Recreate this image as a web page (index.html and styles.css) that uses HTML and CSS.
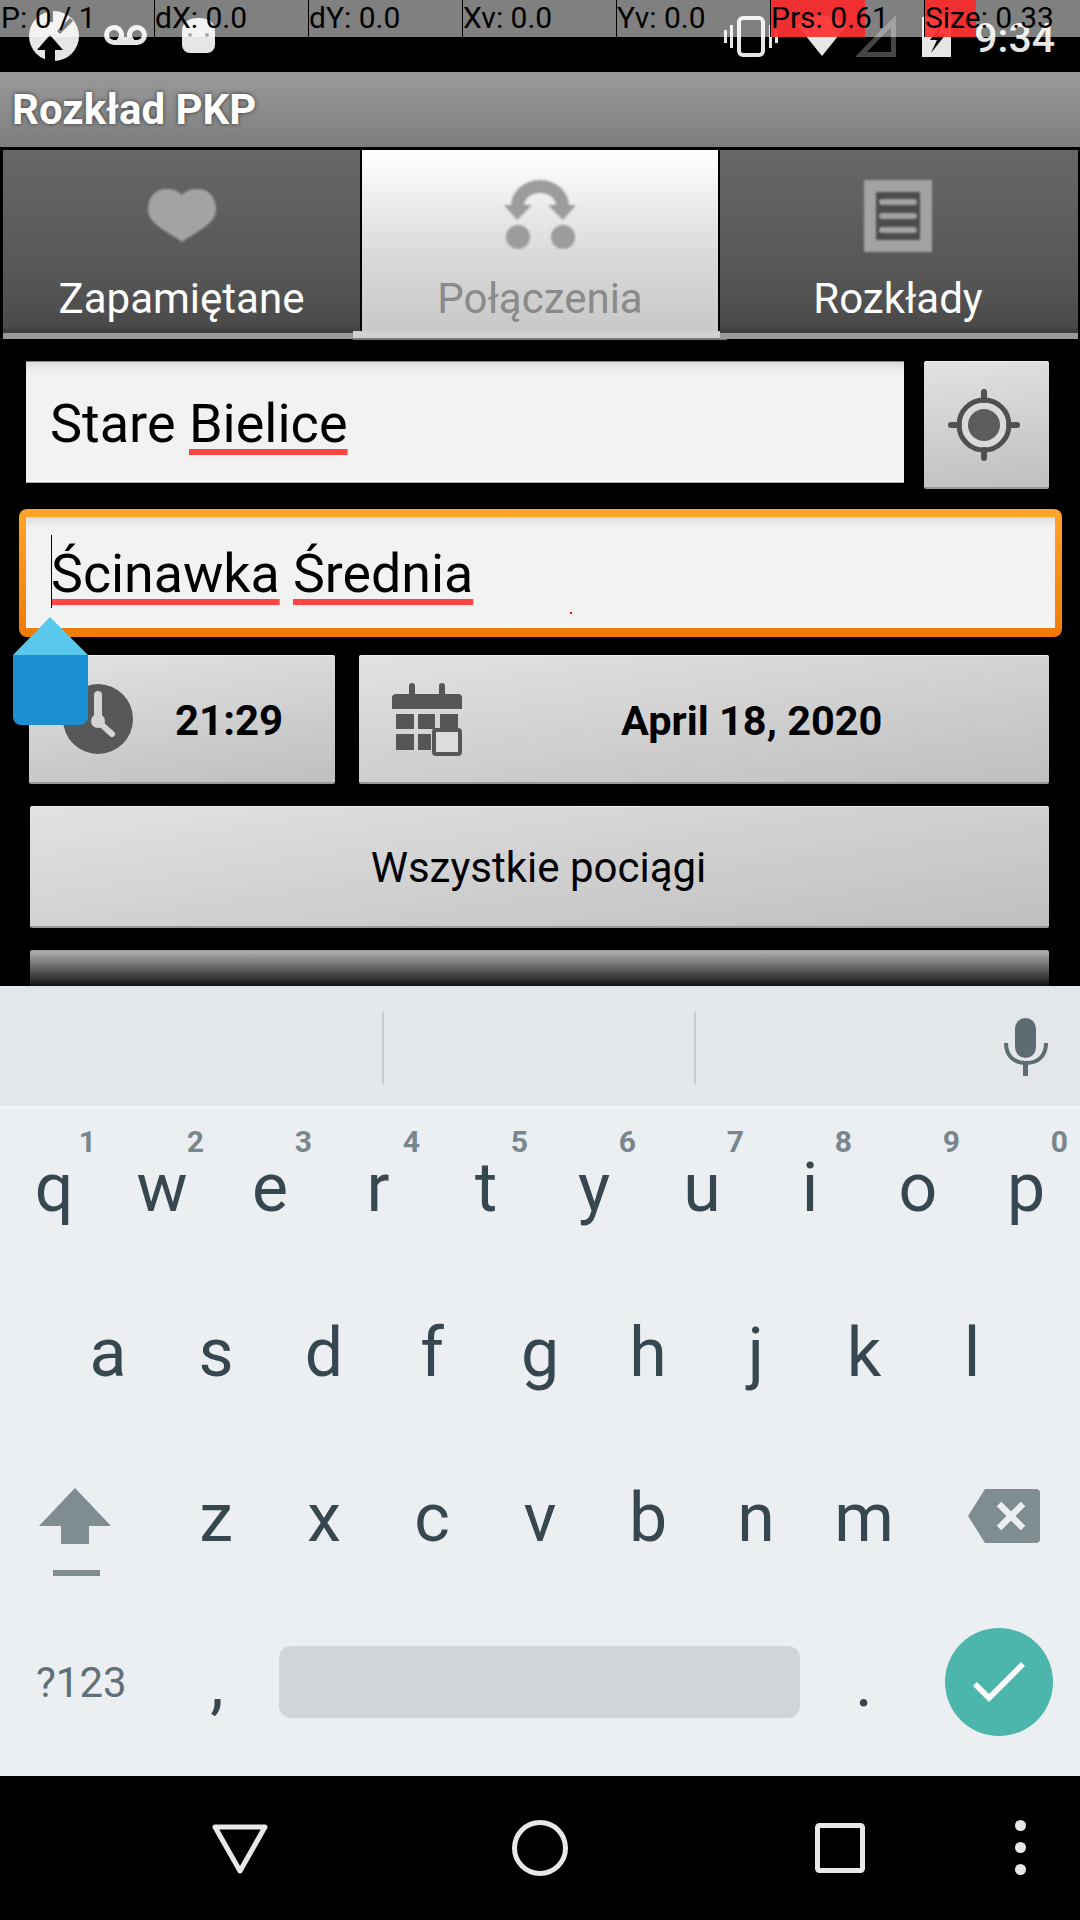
FILE: index.html
```html
<!DOCTYPE html>
<html lang="pl">
<head>
    <meta charset="UTF-8">
    <title>Rozkład PKP</title>
    <link rel="stylesheet" href="styles.css">
</head>
<body>
    <div class="status-bar">
        <svg class="st-update" width="50" height="50" viewBox="0 0 50 50">
            <circle cx="25" cy="25" r="25" fill="#e6e6e6"/>
            <path d="M21 24 8 39H16V50H26V39H34Z" fill="#000"/>
            <path d="M20 0h4v11h-4ZM41 7l3 3-13 13-3-3Z" fill="#000"/>
        </svg>
        <svg class="st-voicemail" width="45" height="20" viewBox="0 0 45 20">
            <path d="M11 2.500a7.500 7.500 0 1 0 0 15h23a7.500 7.500 0 1 0 0-15 7.500 7.500 0 0 0-6 12H17a7.500 7.500 0 0 0-6-12Z" fill="none" stroke="#e6e6e6" stroke-width="5"/>
        </svg>
        <svg class="st-android" width="33" height="35" viewBox="0 0 33 35">
            <path d="M0 13C0 4 7 0 16.500 0S33 4 33 13V27a8 8 0 0 1-8 8H8a8 8 0 0 1-8-8Z" fill="#e6e6e6"/>
            <circle cx="8" cy="17" r="2" fill="#555"/><circle cx="25" cy="17" r="2" fill="#555"/>
        </svg>
        <div class="status-right">
            <svg class="st-vibrate" width="54" height="41" viewBox="0 0 54 41">
                <rect x="15" y="2" width="24" height="37" rx="4" fill="none" stroke="#e6e6e6" stroke-width="4"/>
                <path d="M1.500 14v13M7.500 9v23M46.500 9v23M52.500 14v13" stroke="#e6e6e6" stroke-width="3"/>
            </svg>
            <svg class="st-wifi" width="50" height="42" viewBox="0 0 50 42">
                <path d="M25 42 0 11Q25-8 50 11Z" fill="#e6e6e6"/>
            </svg>
            <svg class="st-signal" width="40" height="42" viewBox="0 0 40 42">
                <path d="M37.500 6V39.500H5Z" fill="none" stroke="#454545" stroke-width="5"/>
            </svg>
            <svg class="st-battery" width="29" height="40" viewBox="0 0 29 40">
                <path d="M0 0H29V40H0Z" fill="#e6e6e6"/>
                <path d="M21 4 8 23h7L9 36 24 17h-7Z" fill="#000"/>
            </svg>
            <span class="st-time">9:34</span>
        </div>
    </div>

    <div class="pointer-bar">
        <div class="pt-cell">P: 0 / 1</div>
        <div class="pt-cell">dX: 0.0</div>
        <div class="pt-cell">dY: 0.0</div>
        <div class="pt-cell">Xv: 0.0</div>
        <div class="pt-cell">Yv: 0.0</div>
        <div class="pt-cell"><i class="pt-fill prs"></i><span>Prs: 0.61</span></div>
        <div class="pt-cell"><i class="pt-fill size"></i><span>Size: 0.33</span></div>
    </div>

    <div class="action-bar">Rozkład PKP</div>

    <div class="tabs">
        <div class="tab tab-fav">
            <svg class="tab-icon" width="68" height="53" viewBox="0 0 68 53">
                <path d="M34 6C38 1 44 0 50 0 61 0 68 8 68 21 68 35 46 44 34 53 22 44 0 35 0 21 0 8 7 0 18 0 24 0 30 1 34 6Z" fill="#a3a3a3"/>
            </svg>
            <span>Zapamiętane</span>
        </div>
        <div class="tab active">
            <svg class="tab-icon" width="72" height="69" viewBox="0 0 72 69" fill="#9c9c9c">
                <path d="M7 26A29 26 0 0 1 65 26H52A16 13 0 0 0 20 26Z"/>
                <path d="M0 25H28L13 40ZM44 25H72L59 40Z"/>
                <circle cx="14" cy="57" r="12"/><circle cx="59" cy="57" r="12"/>
            </svg>
            <span>Połączenia</span>
        </div>
        <div class="tab tab-list">
            <svg class="tab-icon" width="68" height="72" viewBox="0 0 68 72">
                <rect width="68" height="72" fill="#a3a3a3"/>
                <rect x="12" y="12" width="44" height="48" fill="#4c4c4c"/>
                <path d="M18 22H50M18 36H50M18 50H50" stroke="#a3a3a3" stroke-width="6" stroke-linecap="round"/>
            </svg>
            <span>Rozkłady</span>
        </div>
    </div>

    <div class="content">
        <div class="row row-from">
            <div class="field">
                <span class="text">Stare <u>Bielice</u></span>
            </div>
            <div class="btn btn-locate">
                <svg width="72" height="72" viewBox="0 0 72 72">
                    <circle cx="36" cy="36" r="25" fill="#dadada" stroke="#505050" stroke-width="5"/>
                    <circle cx="36" cy="36" r="16" fill="#5c5c5c"/>
                    <path d="M36 3v8M36 61v8M3 36h8M61 36h8" stroke="#505050" stroke-width="6" stroke-linecap="round"/>
                </svg>
            </div>
        </div>

        <div class="field-focus">
            <div class="field">
                <span class="text"><u>Ścinawka</u> <u>Średnia</u></span>
                <i class="caret"></i>
                <i class="speck"></i>
            </div>
        </div>

        <div class="row row-when">
            <div class="btn btn-time">
                <svg width="70" height="70" viewBox="0 0 70 70">
                    <circle cx="35" cy="35" r="35" fill="#585858"/>
                    <path d="M35 11V37" fill="none" stroke="#d4d4d4" stroke-width="8" stroke-linecap="round"/>
                    <circle cx="35" cy="37" r="7" fill="#d4d4d4"/>
                    <path d="M39 41 49 50" fill="none" stroke="#d4d4d4" stroke-width="6" stroke-linecap="round"/>
                </svg>
                <span>21:29</span>
            </div>
            <div class="btn btn-date">
                <svg width="70" height="73" viewBox="0 0 70 73" fill="#565656">
                    <rect x="17" y="0" width="6" height="14" rx="3"/><rect x="47" y="0" width="6" height="14" rx="3"/>
                    <path d="M4 11H66a4 4 0 0 1 4 4V26H0V15a4 4 0 0 1 4-4Z"/>
                    <rect x="4" y="31" width="18" height="15"/><rect x="26" y="31" width="17" height="15"/><rect x="48" y="31" width="18" height="15"/>
                    <rect x="4" y="51" width="18" height="16"/><rect x="26" y="51" width="13" height="16"/>
                    <rect x="42" y="47" width="26" height="24" rx="2" fill="#dcdcdc" stroke="#565656" stroke-width="4"/>
                </svg>
                <span>April 18, 2020</span>
            </div>
        </div>

        <div class="btn btn-wide">Wszystkie pociągi</div>
        <div class="btn-cut"></div>

        <svg class="handle" width="75" height="108" viewBox="0 0 75 108">
            <path d="M37 0 75 38H0Z" fill="#5ac8ec"/>
            <path d="M0 38H75V100a8 8 0 0 1-8 8H8a8 8 0 0 1-8-8Z" fill="#1b8fd2"/>
        </svg>
    </div>

    <div class="keyboard">
        <div class="suggestions">
            <div class="sug"></div>
            <div class="sug"></div>
            <div class="sug sug-mic">
                <svg width="44" height="58" viewBox="0 0 44 58">
                    <rect x="11" y="0" width="21" height="40" rx="10.500" fill="#5d6b73"/>
                    <path d="M2 25C2 38 10 45 22 45S42 38 42 25" fill="none" stroke="#5d6b73" stroke-width="4"/>
                    <rect x="19" y="44" width="5" height="14" fill="#5d6b73"/>
                </svg>
            </div>
        </div>
        <div class="keys">
            <div class="key-row">
                <div class="key"><sup>1</sup>q</div><div class="key"><sup>2</sup>w</div><div class="key"><sup>3</sup>e</div><div class="key"><sup>4</sup>r</div><div class="key"><sup>5</sup>t</div><div class="key"><sup>6</sup>y</div><div class="key"><sup>7</sup>u</div><div class="key"><sup>8</sup>i</div><div class="key"><sup>9</sup>o</div><div class="key"><sup>0</sup>p</div>
            </div>
            <div class="key-row row-home">
                <div class="key">a</div><div class="key">s</div><div class="key">d</div><div class="key">f</div><div class="key">g</div><div class="key">h</div><div class="key">j</div><div class="key">k</div><div class="key">l</div>
            </div>
            <div class="key-row row-bottom">
                <div class="key key-mod key-shift">
                    <svg width="72" height="88" viewBox="0 0 72 88" fill="#7f8c92">
                        <path d="M36 0 72 38H50V56H22V38H0Z"/>
                        <rect x="14" y="82" width="47" height="6"/>
                    </svg>
                </div>
                <div class="key">z</div><div class="key">x</div><div class="key">c</div><div class="key">v</div><div class="key">b</div><div class="key">n</div><div class="key">m</div>
                <div class="key key-mod key-del">
                    <svg width="72" height="54" viewBox="0 0 72 54">
                        <path d="M17 0H68a4 4 0 0 1 4 4V50a4 4 0 0 1-4 4H17L0 27Z" fill="#7f8c92"/>
                        <path d="M31 15 55 39M55 15 31 39" stroke="#eceff2" stroke-width="6.500"/>
                    </svg>
                </div>
            </div>
            <div class="key-row row-space">
                <div class="key-sym">?123</div>
                <div class="key key-comma">,</div>
                <div class="space-bar"></div>
                <div class="key key-period">.</div>
                <div class="enter">
                    <svg width="54" height="40" viewBox="0 0 54 40">
                        <path d="M3 22 17 36 51 2" fill="none" stroke="#fff" stroke-width="5.500"/>
                    </svg>
                </div>
            </div>
        </div>
    </div>

    <div class="nav-bar">
        <svg class="nav-back" width="56" height="50" viewBox="0 0 56 50">
            <path d="M3 3H53L28 47Z" fill="none" stroke="#e8e8e8" stroke-width="5" stroke-linejoin="round"/>
        </svg>
        <svg class="nav-home" width="56" height="56" viewBox="0 0 56 56">
            <circle cx="28" cy="28" r="25.500" fill="none" stroke="#e8e8e8" stroke-width="5"/>
        </svg>
        <svg class="nav-recent" width="50" height="50" viewBox="0 0 50 50">
            <rect x="2.500" y="2.500" width="45" height="45" rx="2" fill="none" stroke="#e8e8e8" stroke-width="5"/>
        </svg>
        <svg class="nav-more" width="11" height="55" viewBox="0 0 11 55" fill="#e8e8e8">
            <circle cx="5.500" cy="5.500" r="5.500"/><circle cx="5.500" cy="27.500" r="5.500"/><circle cx="5.500" cy="49.500" r="5.500"/>
        </svg>
    </div>
</body>
</html>
```

FILE: styles.css
```css
* {
    margin: 0; padding: 0;
    box-sizing: border-box;
}
html, body { height: 100%; }
body {
    position: relative;
    width: 1080px;
    height: 1920px;
    overflow: hidden;
    background: #000;
    font-family: Roboto, "Noto Sans", sans-serif;
    color: #000;
}
i { display: block; }

/* status bar + pointer location overlay */
.status-bar {
    display: flex;
    height: 72px;
    align-items: flex-start;
    background: #000;
}
.st-update { margin: 11px 0 0 29px; }
.st-voicemail { margin: 25px 0 0 24px; }
.st-android { margin: 18px 0 0 34px; }
.status-right {
    display: flex;
    align-items: flex-start;
    margin-left: auto;
    padding-right: 25px;
}
.st-vibrate { margin: 16px 0 0 0; }
.st-wifi { margin: 14px 0 0 19px; }
.st-signal { margin: 15px 0 0 9px; }
.st-battery { margin: 17px 0 0 26px; }
.st-time {
    margin: 15px 0 0 23px;
    font-size: 41px;
    line-height: 46px;
    font-weight: 500;
    color: #e6e6e6;
}

.pointer-bar {
    position: absolute;
    left: 0; top: 0;
    width: 1080px;
    height: 37px;
    display: grid;
    grid-template-columns: repeat(6, 154px) 156px;
    background: rgba(255, 255, 255, .5);
}
.pt-cell {
    position: relative;
    border-left: 1px solid #000;
    font-size: 30px;
    line-height: 36px;
    color: #000;
    white-space: nowrap;
}
.pt-cell:first-child { border-left: 0; padding-left: 1px; }
.pt-cell span { position: relative; }
.pt-fill {
    position: absolute;
    left: 0; top: 0; bottom: 0;
    background: rgba(255, 36, 36, .88);
}
.pt-fill.prs { width: 94px; }
.pt-fill.size { width: 51px; }

/* app chrome */
.action-bar {
    height: 75px;
    margin-bottom: 3px;
    padding-left: 12px;
    background: linear-gradient(#9a9a9a, #7e7e7e);
    color: #fff;
    font-size: 42px;
    font-weight: 700;
    line-height: 76px;
    text-shadow: 0 0 4px #333;
}
.tabs {
    display: grid;
    grid-template-columns: 357px 356px 358px;
    height: 190px;
    padding: 0 2px 0 3px;
    column-gap: 2px;
}
.tab {
    position: relative;
    display: flex;
    flex-direction: column;
    align-items: center;
    height: 189px;
    background: linear-gradient(#676767, #565656 70%, #4a4a4a 96%, #3a3a3a);
    border-bottom: 6px solid #9a9a9a;
    color: #fff;
    font-size: 42px;
    line-height: 48px;
}
.tab span { margin-top: auto; padding-bottom: 10px; }
.tab-icon { filter: blur(1px); }
.tab-fav .tab-icon { margin-top: 39px; }
.tab-list { padding-right: 2px; }
.tab-list .tab-icon { margin-top: 30px; }
.tab.active {
    height: 183px;
    border-bottom: 0;
    background: linear-gradient(#fff, #d8d8d8 60%, #c8c8c8);
    color: #8a8a8a;
}
.tab.active .tab-icon { margin-top: 30px; }
.tab.active::after {
    content: "";
    position: absolute;
    left: -9px; right: -9px; bottom: -7px;
    height: 7px;
    background: #d0d0d0;
    border-bottom: 2px solid #777;
}

/* form */
.content {
    position: relative;
    height: 646px;
    overflow: hidden;
    padding-top: 21px;
}
.row { display: flex; }
.row-from {
    height: 128px;
    padding-left: 26px;
    margin-bottom: 20px;
}
.field {
    position: relative;
    display: flex;
    align-items: flex-start;
    background: #f2f2f2;
    box-shadow: inset 0 10px 10px -6px #d8d8d8, inset 0 -3px 2px -1px #fbfbfb;
}
.row-from .field {
    width: 878px;
    height: 122px;
    border-top: 1px solid #888;
    border-bottom: 1px solid #aaa;
}
.text {
    margin-left: 24px;
    font-size: 54px;
    line-height: 64px;
    white-space: nowrap;
}
.row-from .text { margin-top: 30px; }
u {
    text-decoration: underline #ff4444 6px;
    text-underline-offset: 7px;
    text-decoration-skip-ink: none;
}
.field-focus {
    width: 1043px;
    height: 128px;
    margin-left: 19px;
    padding: 8px 7px 9px;
    border-radius: 8px;
    background: linear-gradient(#ffa52a, #f07a05);
}
.field-focus .field { height: 111px; }
.field-focus .text { margin-left: 25px; margin-top: 25px; font-size: 53.700px; }
.caret {
    position: absolute;
    left: 25px; top: 18px;
    width: 1px;
    height: 73px;
    background: #000;
}
.speck {
    position: absolute;
    left: 544px; top: 95px;
    width: 2px;
    height: 2px;
    background: #f00;
}

.btn {
    display: flex;
    align-items: center;
    background: linear-gradient(172deg, #e2e2e2, #bfbfbf);
    border-top: 1px solid #efefef;
    border-bottom: 2px solid #999;
    border-radius: 2px;
}
.btn svg { filter: blur(.6px); }
.btn-locate {
    justify-content: center;
    width: 125px;
    margin-left: 20px;
    padding-right: 5px;
}
.row-when {
    height: 129px;
    margin: 18px 31px 22px 29px;
    gap: 24px;
}
.btn-time, .btn-date {
    font-size: 42px;
    font-weight: 700;
}
.btn-time span, .btn-date span { padding-top: 2px; }
.btn-time { width: 306px; padding-left: 34px; }
.btn-time span { margin-left: 42px; }
.btn-date { flex: 1; padding-left: 33px; }
.btn-date span { margin-left: 159px; font-size: 41.500px; }
.btn-wide {
    justify-content: center;
    height: 122px;
    margin: 0 31px 22px 30px;
    padding: 2px 2px 0 0;
    font-size: 42px;
}
.btn-cut {
    height: 40px;
    margin: 0 31px 0 30px;
    border-top: 1px solid #999;
    border-radius: 2px 2px 0 0;
    background: linear-gradient(#b0b0b0, #000);
}
.handle {
    position: absolute;
    left: 13px; top: 277px;
}

/* keyboard */
.keyboard {
    height: 790px;
    background: #eceff2;
}
.suggestions {
    display: grid;
    grid-template-columns: 384px 312px 384px;
    height: 120px;
    margin-bottom: 3px;
    padding: 26px 0 22px;
    background: #e3e7ea;
    box-shadow: 0 3px 0 #f2f4f6;
}
.sug { border-right: 2px solid #c6cbce; }
.sug-mic {
    border-right: 0;
    padding: 6px 0 0 308px;
}
.key-row {
    display: grid;
    grid-template-columns: repeat(10, 108px);
    height: 165px;
    color: #37474f;
    font-size: 68px;
    text-align: center;
}
.key {
    position: relative;
    line-height: 158px;
}
.key sup {
    position: absolute;
    right: 12px; top: 17px;
    font-size: 30px;
    font-weight: 700;
    line-height: 32px;
    color: #78868e;
}
.row-home { padding-left: 54px; }
.row-bottom {
    grid-template-columns: 162px repeat(7, 108px) 162px;
}
.key-mod { display: flex; justify-content: center; }
.key-shift { padding: 49px 12px 0 0; }
.key-del { padding-top: 50px; }
.key-del svg { margin-left: 10px; }
.row-space {
    display: flex;
    align-items: flex-start;
}
.key-sym {
    width: 162px;
    padding: 54px 0 0 36px;
    font-size: 42px;
    line-height: 50px;
    text-align: left;
    white-space: nowrap;
    color: #5f7079;
}
.key-comma { width: 108px; margin: 0 8px 0 1px; }
.space-bar {
    width: 521px;
    height: 72px;
    margin: 42px 10px 0 0;
    border-radius: 12px;
    background: #d0d5d8;
}
.key-period { width: 108px; }
.enter {
    display: flex;
    align-items: center;
    justify-content: center;
    width: 108px;
    height: 108px;
    margin: 24px 0 0 27px;
    border-radius: 50%;
    background: #4db6ac;
}

/* nav */
.nav-bar {
    position: relative;
    display: flex;
    align-items: flex-start;
    height: 144px;
    background: #000;
}
.nav-back { margin: 48px 0 0 212px; }
.nav-home { margin: 44px 0 0 244px; }
.nav-recent { margin: 47px 0 0 247px; }
.nav-more { margin: 44px 0 0 150px; }
```
